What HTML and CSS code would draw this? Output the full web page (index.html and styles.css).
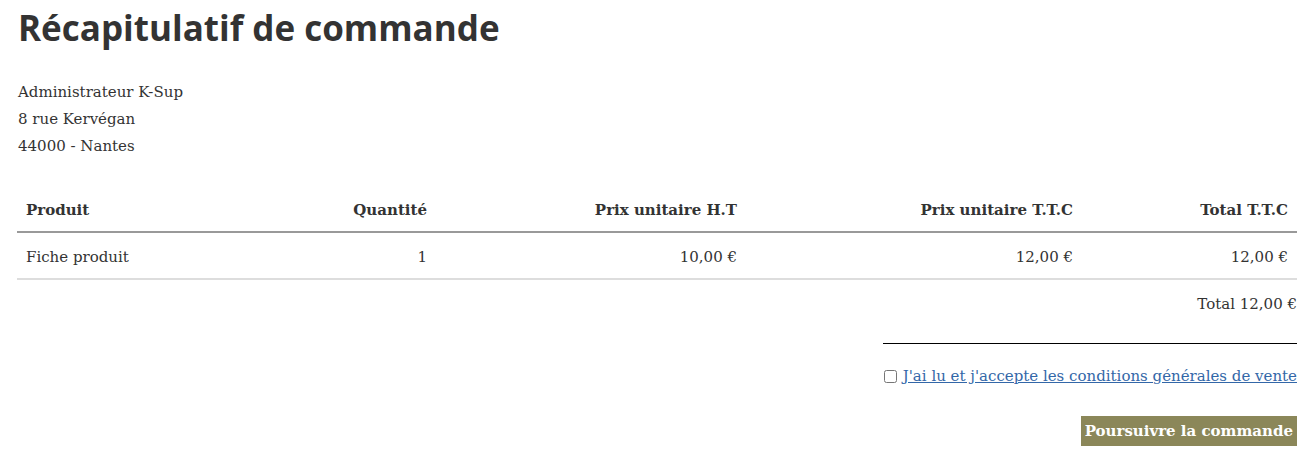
FILE: index.html
```html
<!DOCTYPE html>
<html lang="fr">
<head>
<meta charset="utf-8">
<title>Récapitulatif de commande</title>
<link rel="stylesheet" href="styles.css">
</head>
<body>
<main class="page">
  <h1 class="title">Récapitulatif de commande</h1>
  <address class="addr">
    <div>Administrateur K-Sup</div>
    <div>8 rue Kervégan</div>
    <div>44000 - Nantes</div>
  </address>
  <table class="cart">
    <colgroup>
      <col class="c1"><col class="c2"><col class="c3"><col class="c4"><col class="c5">
    </colgroup>
    <thead>
      <tr>
        <th class="left">Produit</th>
        <th>Quantité</th>
        <th>Prix unitaire H.T</th>
        <th>Prix unitaire T.T.C</th>
        <th>Total T.T.C</th>
      </tr>
    </thead>
    <tbody>
      <tr>
        <td class="left">Fiche produit</td>
        <td>1</td>
        <td>10,00 €</td>
        <td>12,00 €</td>
        <td>12,00 €</td>
      </tr>
    </tbody>
  </table>
  <div class="total">Total 12,00 €</div>
  <div class="summary">
    <hr class="sep">
    <label class="cgv"><input type="checkbox" class="check"><a href="#">J'ai lu et j'accepte les conditions générales de vente</a></label>
    <button class="btn" type="button">Poursuivre la commande</button>
  </div>
</main>
</body>
</html>
```
FILE: styles.css
```css
html, body { margin: 0; padding: 0; background: #fff; }
body {
  font-family: "DejaVu Serif", "Liberation Serif", serif;
  font-size: 15px;
  color: #333;
}
.page { padding: 0 13px 0 17px; }
.title {
  font-family: "Open Sans", sans-serif;
  font-weight: 700;
  font-size: 35px;
  line-height: 44px;
  margin: 6px 0 0 1px;
  color: #333;
}
.addr {
  font-style: normal;
  line-height: 27px;
  margin-top: 29px;
  padding-left: 1px;
}
.cart {
  width: 1280px;
  border-collapse: collapse;
  margin-top: 28px;
}
.c1 { width: 220px; } .c2 { width: 199px; } .c3 { width: 310px; } .c4 { width: 336px; } .c5 { width: 215px; }
.cart th, .cart td {
  text-align: right;
  padding: 12px 9px 10px 9px;
  line-height: 21px;
}
.cart td { padding-top: 14px; }
.cart th.left, .cart td.left { text-align: left; }
.cart th { font-weight: 700; border-bottom: 2px solid #999; }
.cart td { border-bottom: 2px solid #ddd; }
.total { text-align: right; line-height: 21px; margin-top: 14px; }
.summary {
  display: flex;
  flex-direction: column;
  align-items: flex-end;
}
.sep {
  width: 414px;
  margin: 28px 0 0 0;
  border: 0;
  border-top: 1px solid #000;
  height: 0;
}
.cgv { margin-top: 22px; line-height: 21px; display: flex; align-items: center; }
.check { width: 13px; height: 13px; margin: 0 6px 0 0; }
.cgv a { color: #3367a8; text-decoration: underline; }
.btn {
  margin-top: 29px;
  background: #8b8759;
  color: #fff;
  border: 0;
  font-family: "DejaVu Serif", serif;
  font-weight: 700;
  font-size: 15px;
  padding: 0 4px;
  height: 30px;
  line-height: 30px;
}
```
